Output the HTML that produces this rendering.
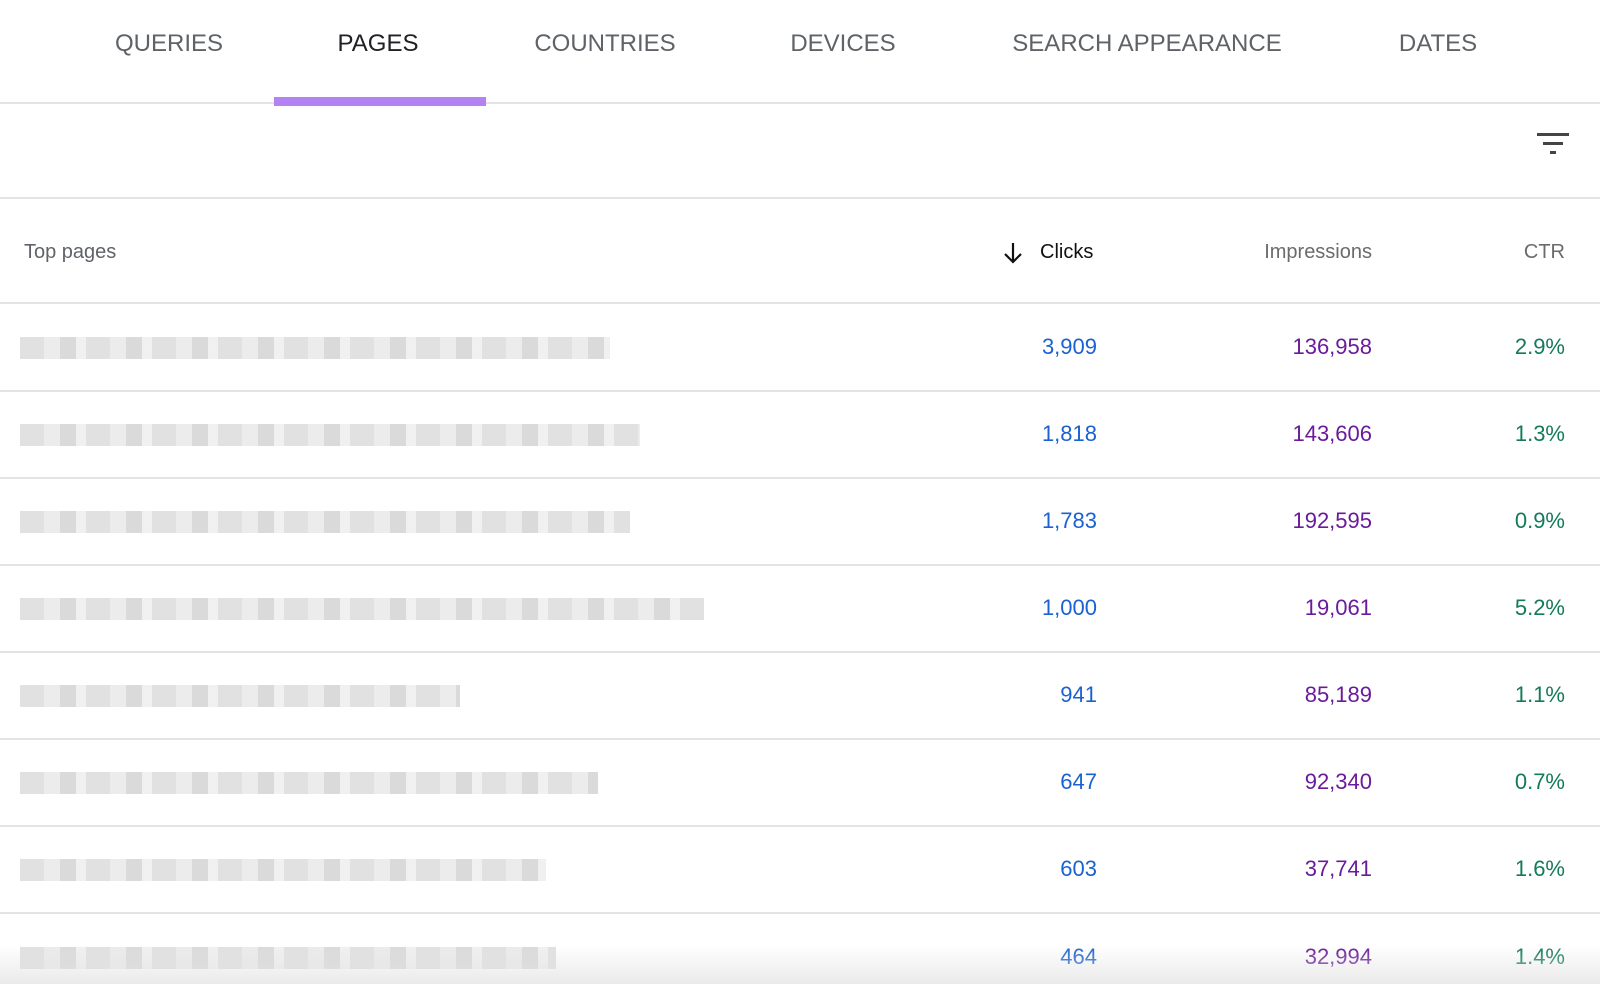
<!DOCTYPE html>
<html><head><meta charset="utf-8"><style>
body{margin:0;width:1600px;height:984px;background:#fff;font-family:"Liberation Sans",sans-serif;position:relative;overflow:hidden}
.a{position:absolute;white-space:nowrap}
.tab{top:30px;font-size:24px;color:#5f6368;transform:translateX(-50%)}
.hl{position:absolute;left:0;width:1600px;height:2px;background:#e3e3e3}
.r{font-size:22px;text-align:right;transform:translateX(-100%)}
.bar{position:absolute;left:20px;height:22px;background:repeating-linear-gradient(90deg,#dcdcdc 0 24px,#e8e8e8 24px 40px,#d4d4d4 40px 56px,#eeeeee 56px 66px);opacity:.85}
</style></head><body>
<div class="a tab" style="left:169px">QUERIES</div>
<div class="a tab" style="left:378px;color:#202124">PAGES</div>
<div class="a tab" style="left:605px">COUNTRIES</div>
<div class="a tab" style="left:843px">DEVICES</div>
<div class="a tab" style="left:1147px">SEARCH APPEARANCE</div>
<div class="a tab" style="left:1438px">DATES</div>
<div class="hl" style="top:102px"></div>
<div class="a" style="left:274px;top:97px;width:212px;height:9px;background:#b382f3"></div>
<svg class="a" style="left:1537px;top:132px" width="32" height="26"><rect x="0" y="1" width="32" height="3" fill="#444"/><rect x="6" y="10" width="20" height="3" fill="#444"/><rect x="13" y="19" width="6" height="3" fill="#444"/></svg>
<div class="hl" style="top:197px"></div>
<div class="a" style="left:24px;top:241px;font-size:20px;color:#5f6368">Top pages</div>
<svg class="a" style="left:1003px;top:241px" width="20" height="24"><path d="M10 2V21M2 13L10 21L18 13" stroke="#111" stroke-width="2.2" fill="none"/></svg>
<div class="a" style="left:1040px;top:241px;font-size:20px;color:#111">Clicks</div>
<div class="a r" style="left:1372px;top:241px;font-size:20px;color:#6b6b6b">Impressions</div>
<div class="a r" style="left:1565px;top:241px;font-size:20px;color:#6b6b6b">CTR</div>
<div class="hl" style="top:302px"></div>
<div class="bar" style="top:337px;width:590px"></div>
<div class="bar" style="top:424px;width:620px"></div>
<div class="bar" style="top:511px;width:610px"></div>
<div class="bar" style="top:598px;width:684px"></div>
<div class="bar" style="top:685px;width:440px"></div>
<div class="bar" style="top:772px;width:578px"></div>
<div class="bar" style="top:859px;width:526px"></div>
<div class="bar" style="top:947px;width:536px"></div>
<div class="hl" style="top:390px"></div>
<div class="hl" style="top:477px"></div>
<div class="hl" style="top:564px"></div>
<div class="hl" style="top:651px"></div>
<div class="hl" style="top:738px"></div>
<div class="hl" style="top:825px"></div>
<div class="hl" style="top:912px"></div>
<div class="a r" style="left:1097px;top:334px;color:#1a62d1">3,909</div>
<div class="a r" style="left:1097px;top:421px;color:#1a62d1">1,818</div>
<div class="a r" style="left:1097px;top:508px;color:#1a62d1">1,783</div>
<div class="a r" style="left:1097px;top:595px;color:#1a62d1">1,000</div>
<div class="a r" style="left:1097px;top:682px;color:#1a62d1">941</div>
<div class="a r" style="left:1097px;top:769px;color:#1a62d1">647</div>
<div class="a r" style="left:1097px;top:856px;color:#1a62d1">603</div>
<div class="a r" style="left:1097px;top:944px;color:#1a62d1">464</div>
<div class="a r" style="left:1372px;top:334px;color:#6a1b9a">136,958</div>
<div class="a r" style="left:1372px;top:421px;color:#6a1b9a">143,606</div>
<div class="a r" style="left:1372px;top:508px;color:#6a1b9a">192,595</div>
<div class="a r" style="left:1372px;top:595px;color:#6a1b9a">19,061</div>
<div class="a r" style="left:1372px;top:682px;color:#6a1b9a">85,189</div>
<div class="a r" style="left:1372px;top:769px;color:#6a1b9a">92,340</div>
<div class="a r" style="left:1372px;top:856px;color:#6a1b9a">37,741</div>
<div class="a r" style="left:1372px;top:944px;color:#6a1b9a">32,994</div>
<div class="a r" style="left:1565px;top:334px;color:#137a5a">2.9%</div>
<div class="a r" style="left:1565px;top:421px;color:#137a5a">1.3%</div>
<div class="a r" style="left:1565px;top:508px;color:#137a5a">0.9%</div>
<div class="a r" style="left:1565px;top:595px;color:#137a5a">5.2%</div>
<div class="a r" style="left:1565px;top:682px;color:#137a5a">1.1%</div>
<div class="a r" style="left:1565px;top:769px;color:#137a5a">0.7%</div>
<div class="a r" style="left:1565px;top:856px;color:#137a5a">1.6%</div>
<div class="a r" style="left:1565px;top:944px;color:#137a5a">1.4%</div>
<div class="a" style="left:0;top:945px;width:1600px;height:39px;background:linear-gradient(rgba(255,255,255,0),rgba(225,225,225,.7))"></div>
</body></html>
